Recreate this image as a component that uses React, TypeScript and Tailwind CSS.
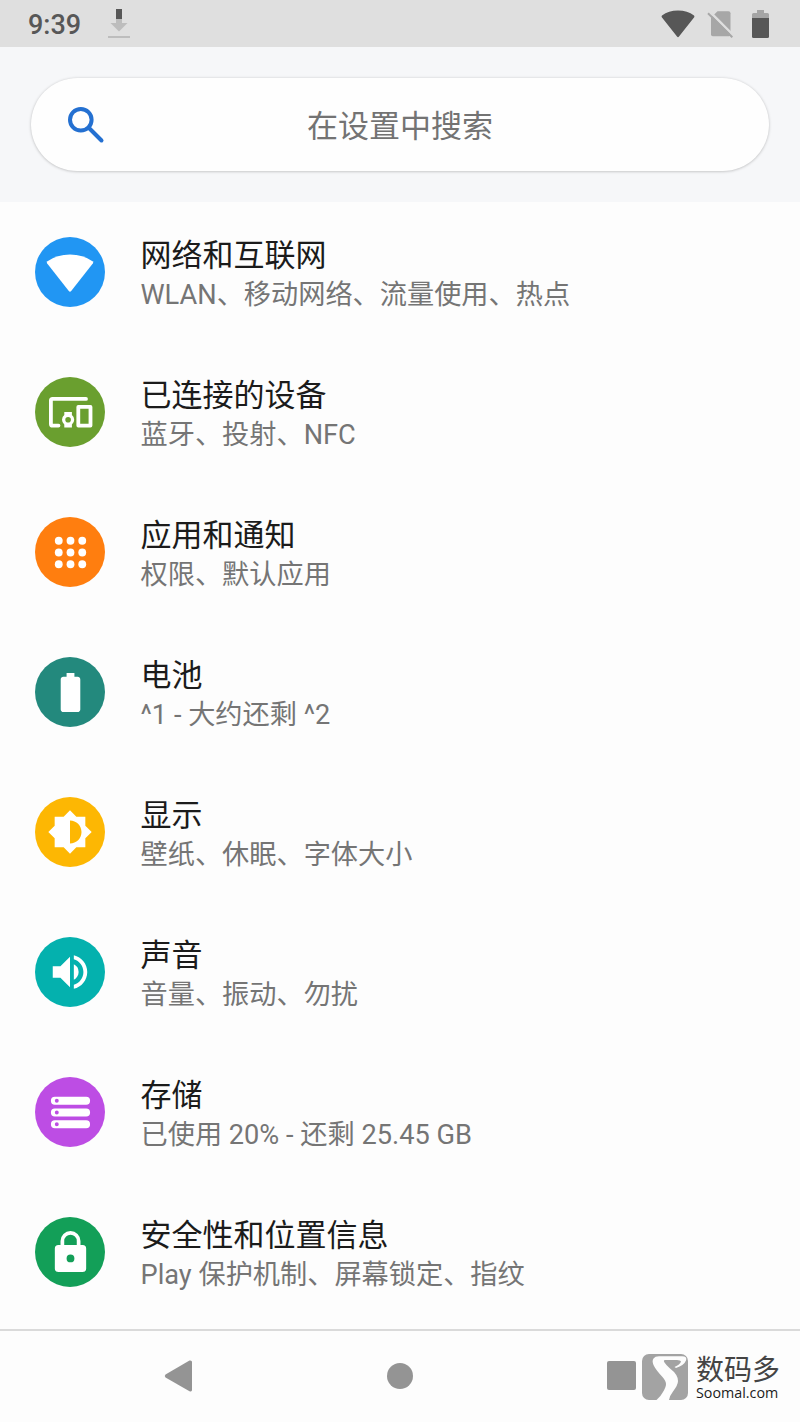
import type { ReactNode } from "react";
import {
  MdBatteryFull,
  MdBrightnessMedium,
  MdVolumeUp,
} from "react-icons/md";

type SettingItem = {
  title: string;
  summary: string;
  color: string;
  icon: ReactNode;
};

const WifiIcon = () => (
  <svg className="size-[70px]" viewBox="0 0 70 70" fill="currentColor">
    <path d="M12.2 26.6Q11.1 25.2 12.5 24.2Q22 17.5 35 17.5T57.5 24.2Q58.9 25.2 57.8 26.6L36.2 54Q35 55.4 33.8 54Z" />
  </svg>
);

const DevicesIcon = () => (
  <svg
    className="size-[70px]"
    viewBox="0 0 70 70"
    fill="none"
    stroke="currentColor"
    strokeWidth="3.8"
    strokeLinecap="round"
    strokeLinejoin="round"
  >
    <path d="M51 21.9H17.6Q15.9 21.9 15.9 23.6V46.9Q15.9 48.6 17.6 48.6H23.5" />
    <path
      fill="currentColor"
      stroke="none"
      fillRule="evenodd"
      d="M29.3 35h7.6v3q2.3 1.8 2.3 4.7t-2.3 4.7v3.1h-7.6v-3.1q-2.3-1.8-2.3-4.7t2.3-4.7zM33.1 39.9a2.8 2.8 0 1 0 0 5.6a2.8 2.8 0 1 0 0-5.6z"
    />
    <rect x="43.3" y="29.9" width="12.2" height="18.7" />
  </svg>
);

const AppsIcon = () => (
  <svg className="size-[47px]" viewBox="0 0 24 24" fill="currentColor">
    {[6, 12, 18].map((cy) =>
      [6, 12, 18].map((cx) => <circle key={`${cx}-${cy}`} cx={cx} cy={cy} r="2" />)
    )}
  </svg>
);

const StorageIcon = () => (
  <svg className="size-[47px]" viewBox="0 0 24 24" fill="currentColor">
    <path
      fillRule="evenodd"
      d="M4 4h16a2 2 0 0 1 0 4H4a2 2 0 0 1 0-4zM5 5a1 1 0 1 0 0 2a1 1 0 1 0 0-2zM4 10h16a2 2 0 0 1 0 4H4a2 2 0 0 1 0-4zM5 11a1 1 0 1 0 0 2a1 1 0 1 0 0-2zM4 16h16a2 2 0 0 1 0 4H4a2 2 0 0 1 0-4zM5 17a1 1 0 1 0 0 2a1 1 0 1 0 0-2z"
    />
  </svg>
);

const LockIcon = () => (
  <svg className="size-[47px]" viewBox="0 0 24 24" fill="currentColor">
    <path
      fillRule="evenodd"
      d="M18.2 8.2H17.1V6.1a5.1 5.1 0 0 0-10.2 0v2.1H5.8Q4 8.2 4 10V20.2Q4 22 5.8 22H18.2Q20 22 20 20.2V10Q20 8.2 18.2 8.2zM12 17a2 2 0 1 1 0-4a2 2 0 1 1 0 4zM8.8 8.2V6.1a3.2 3.2 0 0 1 6.4 0v2.1z"
    />
  </svg>
);

const settings: SettingItem[] = [
  {
    title: "网络和互联网",
    summary: "WLAN、移动网络、流量使用、热点",
    color: "bg-[#2196f3]",
    icon: <WifiIcon />,
  },
  {
    title: "已连接的设备",
    summary: "蓝牙、投射、NFC",
    color: "bg-[#6a9f2f]",
    icon: <DevicesIcon />,
  },
  {
    title: "应用和通知",
    summary: "权限、默认应用",
    color: "bg-[#ff7e0f]",
    icon: <AppsIcon />,
  },
  {
    title: "电池",
    summary: "^1 - 大约还剩 ^2",
    color: "bg-[#23897d]",
    icon: <MdBatteryFull className="size-[47px]" />,
  },
  {
    title: "显示",
    summary: "壁纸、休眠、字体大小",
    color: "bg-[#fdb703]",
    icon: <MdBrightnessMedium className="size-[46px]" />,
  },
  {
    title: "声音",
    summary: "音量、振动、勿扰",
    color: "bg-[#04b1ae]",
    icon: <MdVolumeUp className="size-[46px]" />,
  },
  {
    title: "存储",
    summary: "已使用 20% - 还剩 25.45 GB",
    color: "bg-[#bd4de4]",
    icon: <StorageIcon />,
  },
  {
    title: "安全性和位置信息",
    summary: "Play 保护机制、屏幕锁定、指纹",
    color: "bg-[#139f58]",
    icon: <LockIcon />,
  },
];

const StatusBar = () => (
  <header className="flex h-[47px] items-center justify-between bg-[#dfdfdf] pl-7 pr-[31px] text-[#575757]">
    <div className="flex items-center gap-[27px]">
      <span className="pt-[3px] text-[27px] leading-none font-medium">9:39</span>
      <svg className="h-[30px] w-[22px]" viewBox="0 0 22 30">
        <path d="M8 0h6v10H8z" fill="#575757" />
        <path d="M8 10h6v4h5.5L11 22.5L2.5 14H8z" fill="#bdbdbd" />
        <path d="M0 27h22v2H0z" fill="#bdbdbd" />
      </svg>
    </div>
    <div className="flex items-center">
      <svg className="h-7 w-[34px]" viewBox="0 0 34 28" fill="currentColor">
        <path d="M.8 7.2Q.2 6.3 1 5.6Q7.5 .5 17 .5T33 5.6Q33.8 6.3 33.2 7.2L18 26.5Q17 27.8 16 26.5Z" />
      </svg>
      <svg className="ml-3 h-7 w-[27px]" viewBox="0 0 27 28">
        <path
          d="M10.5 1.2H21.5Q23.5 1.2 23.5 3.2V24.5Q23.5 26.2 21.7 26.2H5.8Q4 26.2 4 24.5V7.7Z"
          fill="#a7a7a7"
        />
        <path d="M2.7 1.6L27 25.9" stroke="#dfdfdf" strokeWidth="2.5" />
        <path d="M1 3.3L25.3 27.3" stroke="#a7a7a7" strokeWidth="2" />
      </svg>
      <svg className="ml-[18px] h-[30px] w-[17px]" viewBox="0 0 17 30">
        <path d="M5 1h7v3h3.5Q17 4 17 5.5V9H0V5.5Q0 4 1.5 4H5z" fill="#a5a5a5" />
        <path d="M0 9h17v18.5q0 1.5-1.5 1.5h-14Q0 29 0 27.5z" fill="currentColor" />
      </svg>
    </div>
  </header>
);

const SearchBar = () => (
  <div className="h-[155px] bg-[#f6f7f9] px-[31px] pt-[31px]">
    <div className="relative flex h-[93px] items-center justify-center rounded-full bg-[#fefefe] shadow-[0_0.5px_3px_rgba(0,0,0,0.25)]">
      <svg
        className="absolute top-[28px] left-[36px] size-[38px]"
        viewBox="0 0 38 38"
        fill="none"
        stroke="#2470d1"
        strokeWidth="4"
      >
        <circle cx="13.8" cy="13.8" r="10.8" />
        <path d="M22 22L34.5 34.5" strokeLinecap="round" />
      </svg>
      <span className="pt-1 text-[31px] leading-none text-[#737373]">在设置中搜索</span>
    </div>
  </div>
);

const SettingRow = ({ title, summary, color, icon }: SettingItem) => (
  <li className="flex h-[140px] items-center gap-[35.5px] pl-[35px]">
    <div
      className={`flex size-[70px] shrink-0 items-center justify-center rounded-full text-white ${color}`}
    >
      {icon}
    </div>
    <div className="pt-[3px] whitespace-nowrap">
      <h2 className="text-[31px] leading-[42px] text-[#1b1b1b]">{title}</h2>
      <p className="text-[27.2px] leading-[36px] text-[#757575]">{summary}</p>
    </div>
  </li>
);

const Watermark = () => (
  <div className="flex items-center gap-2">
    <svg className="size-[46px]" viewBox="0 0 46 46">
      <rect width="46" height="46" rx="7" fill="#a3a3a3" />
      <path
        d="M17 2.2H40Q45.5 2.2 44 6.5Q42 11.5 34 14L32.5 13Q38 10.5 39 7.8Q38.5 6 35 6H23Q21 6 22.5 8.5Q24 11 28 14.5Q36 20.5 36 27Q36 31 31 37.5Q27.5 42 27 46H14.5Q19 42 21 38Q24 33 24 30Q24 27 20.5 23Q14 16 12 12Q9.5 7 11.5 4.5Q13 2.2 17 2.2Z"
        fill="#fdfdfd"
      />
    </svg>
    <div className="flex flex-col">
      <span className="text-[28px] leading-[31px] text-[#444]">数码多</span>
      <span className="font-['Open_Sans','Noto_Sans',sans-serif] text-[14.3px] leading-[14px] text-[#1b1b1b]">
        Soomal.com
      </span>
    </div>
  </div>
);

const NavigationBar = () => (
  <nav className="mt-[7px] flex h-[91px] items-center border-t-2 border-[#dadada] pl-[164px] text-[#949494]">
    <svg className="h-8 w-7" viewBox="0 0 28 32" fill="currentColor">
      <path d="M1.5 14.5L25.5 .5Q28 0 28 2V30Q28 32 25.5 31.2L1.5 17.5Q0 16 1.5 14.5Z" />
    </svg>
    <div className="ml-[195px] size-[26px] rounded-full bg-current" />
    <div className="ml-[194px] size-[29px] rounded-[2px] bg-current" />
    <div className="ml-1.5 pt-[3px]">
      <Watermark />
    </div>
  </nav>
);

const App = () => {
  return (
    <div className="h-[1422px] w-[800px] overflow-hidden bg-[#fdfdfd] font-[Roboto,'Noto_Sans_CJK_SC',sans-serif]">
      <StatusBar />
      <SearchBar />
      <ul>
        {settings.map((item) => (
          <SettingRow key={item.title} {...item} />
        ))}
      </ul>
      <NavigationBar />
    </div>
  );
};

export default App;
